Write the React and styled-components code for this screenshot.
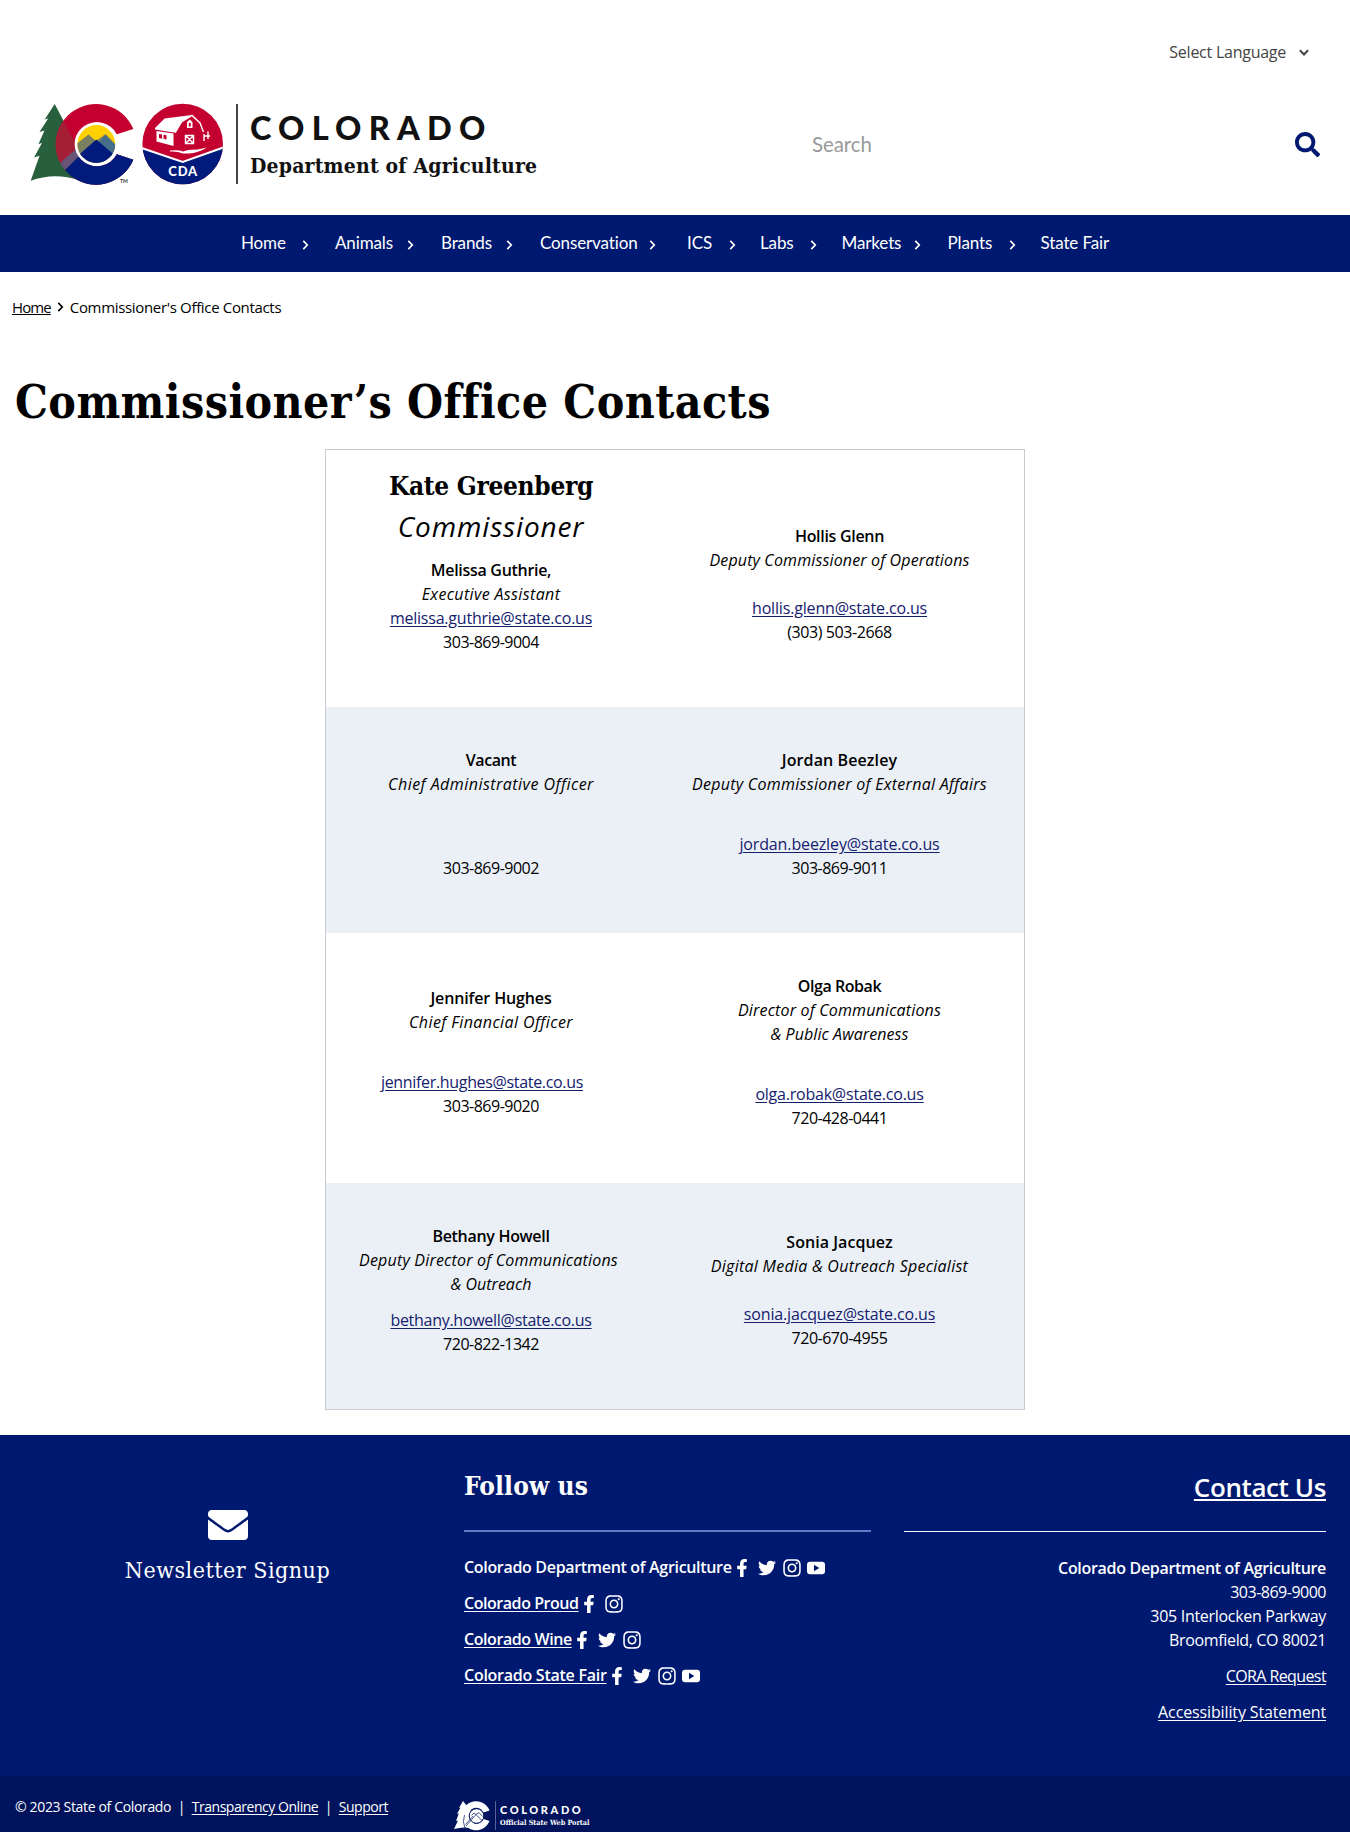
import React from 'react';
import styled, { createGlobalStyle, css } from 'styled-components';
import { FaSearch, FaEnvelope, FaFacebookF, FaTwitter, FaInstagram } from 'react-icons/fa';

const NAVY = '#001970';
const SANS = '"Open Sans", "Noto Sans", sans-serif';
const MENU = 'Lato, "Open Sans", sans-serif';
const SLAB = '"DejaVu Serif Condensed", "DejaVu Serif", serif';

const GlobalStyle = createGlobalStyle`
  * { box-sizing: border-box; }
  html, body { margin: 0; background: #fff; }
  body { font: 16px/24px ${SANS}; color: #000; overflow: hidden; }
  h1, h2, h3, p { margin: 0; }
  a { color: inherit; }
`;

const Page = styled.div`
  width: 1350px;
  height: 1832px;
  display: flex;
  flex-direction: column;
  overflow: hidden;
`;

/* ---------- header ---------- */

const Header = styled.header`
  height: 215px;
  flex: none;
  padding: 40px 30px 0 24px;
`;

const LanguageBar = styled.div`
  display: flex;
  justify-content: flex-end;
  align-items: center;
  gap: 13px;
  height: 24px;
  padding-right: 11px;
  color: #444;
  letter-spacing: -0.25px;
`;

const Masthead = styled.div`
  display: flex;
  align-items: flex-start;
  margin-top: 36px;
`;

const BrandName = styled.div`
  width: 576px;
  height: 80px;
  margin: 4px 0 0 12px;
  padding-left: 12px;
  border-left: 2px solid #444;
  white-space: nowrap;
  color: #111;
`;

const BrandState = styled.div`
  margin-top: 5px;
  font: 900 32.5px/38px ${MENU};
  letter-spacing: 7.2px;
`;

const BrandAgency = styled.div`
  margin-top: 5px;
  font: 700 21px/28px ${SLAB};
  letter-spacing: 0.18px;
`;

const SearchForm = styled.div`
  flex: 1;
  display: flex;
  justify-content: space-between;
  align-items: center;
  height: 88px;
  color: #999;
  font: 20.5px/28px ${MENU};
  letter-spacing: -0.1px;
  svg { color: ${NAVY}; }
`;

/* ---------- navigation ---------- */

const Nav = styled.nav`
  flex: none;
  display: flex;
  align-items: center;
  height: 57px;
  padding: 0 0 1px 241px;
  background: ${NAVY};
  color: #fff;
  font: 17px/24px ${MENU};
  letter-spacing: -0.12px;
`;

const NavItem = styled.div`
  flex: none;
  display: flex;
  align-items: center;
  justify-content: space-between;
  width: ${(p) => p.$width}px;
  padding-right: ${(p) => p.$after}px;
  white-space: nowrap;
  svg { margin-top: 3px; }
`;

const Crumbs = styled.div`
  display: flex;
  align-items: center;
  flex: none;
  gap: 6px;
  height: 72px;
  padding: 0 0 2px 12px;
  font-size: 15px;
  letter-spacing: -0.33px;
  a { letter-spacing: -0.9px; }
`;

const Title = styled.h1`
  flex: none;
  height: 105px;
  padding: 30px 0 0 15px;
  font: 700 46px/56px ${SLAB};
  letter-spacing: 0.42px;
  white-space: nowrap;
`;

/* ---------- contacts ---------- */

const Contacts = styled.section`
  flex: none;
  width: 700px;
  height: 961px;
  margin-left: 325px;
  border: 1px solid #c8cace;
`;

const ContactRow = styled.div`
  display: grid;
  grid-template-columns: 330px 367px;
  height: ${(p) => p.$height}px;
  background: ${(p) => (p.$shaded ? '#ebf0f7' : '#fff')};
`;

const Contact = styled.div`
  padding-top: ${(p) => p.$top}px;
  text-align: center;
  white-space: nowrap;
`;

const line = css`
  letter-spacing: ${(p) => p.$ls || 0}px;
  padding-right: ${(p) => p.$trail || 0}px;
`;

const Name = styled.p`
  ${line}
  font-weight: 600;
`;

const Role = styled.p`
  ${line}
  font-style: italic;
`;

const Lead = styled.h2`
  font: 700 26px/40px ${SLAB};
  letter-spacing: -0.3px;
`;

const LeadRole = styled.h3`
  font: italic 400 28px/40px ${SANS};
  letter-spacing: 0.85px;
  margin-bottom: 12px;
`;

const Reach = styled.div`
  margin-top: ${(p) => p.$gap}px;
`;

const Email = styled.p`
  ${line}
  a { color: #14206e; text-underline-offset: 2px; }
`;

const Phone = styled.p`
  letter-spacing: ${(p) => (p.$wide ? -0.4 : -0.5)}px;
`;

/* ---------- footer ---------- */

const Footer = styled.footer`
  flex: none;
  display: grid;
  grid-template-columns: 455px 416px 455px;
  height: 341px;
  margin-top: 25px;
  background: ${NAVY};
  color: #fff;
`;

const Newsletter = styled.div`
  display: flex;
  flex-direction: column;
  align-items: center;
  padding-top: 70px;
  font: 23px/34px ${SLAB};
  letter-spacing: 0.5px;
  svg { margin-bottom: 8px; }
`;

const Follow = styled.div`
  padding: 32px 0 0 9px;
`;

const FollowTitle = styled.h2`
  height: 65px;
  border-bottom: 2px solid #6478c4;
  font: 700 26px/38px ${SLAB};
  letter-spacing: 0.15px;
`;

const FollowList = styled.div`
  display: flex;
  flex-direction: column;
  gap: 12px;
  padding-top: 23px;
`;

const FollowItem = styled.div`
  display: flex;
  align-items: center;
  height: 24px;
  white-space: nowrap;
`;

const FollowName = styled.span`
  ${line}
  font-weight: 600;
  text-decoration: ${(p) => (p.$linked ? 'underline' : 'none')};
  text-underline-offset: 2px;
  margin-right: -2px;
`;

const Social = styled.span`
  display: flex;
  justify-content: center;
  width: 24.8px;
  padding-top: 2px;
`;

const ContactUs = styled.div`
  margin-left: 33px;
  padding-top: 32px;
  text-align: right;
  a { text-underline-offset: 2px; }
`;

const ContactTitle = styled.h2`
  height: 65px;
  margin-bottom: 24px;
  border-bottom: 1px solid #fff;
  font: 600 26px/40px ${SANS};
  letter-spacing: -0.4px;
`;

const AddressLine = styled.p`
  letter-spacing: ${(p) => p.$ls}px;
  font-weight: ${(p) => (p.$strong ? 600 : 400)};
  margin-top: ${(p) => (p.$spaced ? 12 : 0)}px;
`;

const Legal = styled.div`
  flex: none;
  display: flex;
  height: 56px;
  background: #00135c;
  color: #fff;
  font-size: 14px;
`;

const LegalLinks = styled.div`
  display: flex;
  width: 439px;
  margin-left: 15px;
  padding-top: 19px;
  letter-spacing: -0.34px;
  white-space: nowrap;
  a { text-underline-offset: 2px; letter-spacing: -0.46px; }
`;

const Bar = styled.span`
  width: 20.5px;
  text-align: center;
`;

const Portal = styled.div`
  display: flex;
  padding-top: 25px;
`;

const PortalText = styled.div`
  height: 29px;
  margin-left: 5px;
  padding-left: 4px;
  border-left: 1px solid #55629c;
  white-space: nowrap;
`;

const PortalState = styled.div`
  font: 900 11px/17px ${MENU};
  letter-spacing: 2.6px;
`;

const PortalNote = styled.div`
  font: 700 7.2px/9px ${SLAB};
`;

/* ---------- drawings ---------- */

const Chevron = ({ down }) => (
  <svg width={down ? 10 : 7} height={down ? 7 : 10} viewBox={down ? '0 0 9 6' : '0 0 6 9'} fill="none" stroke="currentColor" strokeWidth={down ? 1.8 : 1.5}>
    <path d={down ? 'M.8 1l3.7 3.8L8.200 1' : 'M1 .8l3.600 3.700L1 8.200'} />
  </svg>
);

const YouTube = () => (
  <svg width="18" height="18" viewBox="0 0 18 18" fill="#fff">
    <path fillRule="evenodd" d="M3 2.800h12a3 3 0 0 1 3 3v6.400a3 3 0 0 1-3 3H3a3 3 0 0 1-3-3V5.800a3 3 0 0 1 3-3zM7 5.800v6.400L12.300 9z" />
  </svg>
);

const SealText = styled.text`
  font: 900 13px ${MENU};
  letter-spacing: 0.8px;
`;

const TradeText = styled.text`
  font: 700 5px ${MENU};
`;

const Emblems = () => (
  <svg width="200" height="88" viewBox="0 0 200 88">
    <defs>
      <clipPath id="cshape">
        <path d="M109.300 29A40.300 40.300 0 1 0 109.300 59.700L92.800 54.300A22 22 0 1 1 92.800 34.300Z" />
      </clipPath>
      <clipPath id="disc"><circle cx="72.300" cy="44" r="18.900" /></clipPath>
      <clipPath id="seal"><circle cx="158.700" cy="44" r="40.300" /></clipPath>
      <clipPath id="tree">
        <path d="M30.700 4L20.700 19.500l3.500-1L15.500 32l5-1.500L14.500 44l3.500-1L10 57.500l5.500-1.800L6.700 80.700Q30 72 55 80L60 60Z" />
      </clipPath>
    </defs>
    <path fill="#285f3c" d="M30.700 4L20.700 19.500l3.500-1L15.500 32l5-1.500L14.500 44l3.500-1L10 57.500l5.500-1.800L6.700 80.700Q30 72 55 80L60 60Z" />
    <g clipPath="url(#cshape)">
      <rect x="30" y="0" width="82" height="88" fill="#c3002f" />
      <path d="M36 61L52 45H70V50H112V88H30Z" fill="#7a4867" />
      <path d="M41 69.500L61 50H112V88H41Z" fill="#001b7c" />
      <path clipPath="url(#tree)" d="M30 0H60V46L30 68Z" fill="#a41f34" />
      <path clipPath="url(#tree)" d="M36 63L52 49L57 54L41.500 69.500Q37 66 36 63Z" fill="#685476" />
      <path clipPath="url(#tree)" d="M41.500 69.500Q47 77 56 82L36 84Z" fill="#0b3c4a" />
    </g>
    <circle cx="72.300" cy="44" r="21.700" fill="#fff" />
    <g clipPath="url(#disc)">
      <rect x="53" y="24" width="39" height="40" fill="#ffd100" />
      <path d="M50 46L64.500 34.500L72 41L81.500 34L96 49V66H50Z" fill="#7b8060" />
      <path d="M74 43L81.500 35L96 50V66Z" fill="#456d8c" />
      <path d="M50 59L72.300 39.500L96 60V66H50Z" fill="#001b7c" />
    </g>
    <TradeText x="96" y="83" fill="#333">TM</TradeText>

    <g clipPath="url(#seal)">
      <rect x="118" y="3" width="82" height="82" fill="#c3002f" />
      <path d="M116 48L158.700 62.200L202 47V90H116Z" fill="#001b7c" />
      <path d="M116 47.500L158.700 62L202 46.500" fill="none" stroke="#fff" strokeWidth="2" />
    </g>
    <g fill="#fff">
      <path d="M140.500 18.500L168 15L158 21.500L151.500 31.500L149.500 32.500L131 29.500L131 28Z" />
      <path d="M132.500 31L149.500 33.500V46L132.500 41.500Z" />
      <path d="M146 50.500Q155 49.500 159 51.500L164 50Q174 50 183 47.500Q174 53 165 53.500L159 53.500Q153 51 146 51.500Z" />
    </g>
    <path d="M135 34l3 .5v4.200l-3-.7zM139.500 34.700l3 .5v4.300l-3-.8z" fill="#c3002f" />
    <g fill="none" stroke="#fff" strokeWidth="1.400">
      <path d="M151 33L157.500 22L168 15.500L176 23L179.500 32" />
      <path d="M161.500 35.500h8v8h-8zM161.500 35.500l8 8M169.500 35.500l-8 8" />
      <path d="M180 34v7M184 31.500v7.500M180 36h6" />
    </g>
    <path d="M163 28v-6l2.700-2.500L168.500 22v6zM164.800 23v3.500h2V23z" fill="#fff" fillRule="evenodd" />
    <SealText x="159.200" y="76.300" textAnchor="middle" fill="#fff">CDA</SealText>
  </svg>
);

const PortalEmblem = () => (
  <svg width="36" height="30" viewBox="0 0 36 30">
    <path fill="#fff" d="M9 0L5 7l1.500-.4L3 13l1.800-.5L2 20l2-.6L0 28q11-3 20 0V14z" />
    <path fill="#fff" d="M35.500 9.500A14.500 14.500 0 1 0 35.500 20L29.500 18A8 8 0 1 1 29.500 11.500Z" />
    <circle cx="22.500" cy="15" r="7.300" fill="#fff" stroke="#00135c" strokeWidth="1" />
    <path d="M11 27Q8 21 10.500 14M11.500 23.500L19 15M12 25L22 13.500L28.500 20M17.500 14.500L20 12L22 13.500L25 11.500L28.500 15.500" fill="none" stroke="#00135c" strokeWidth=".7" />
  </svg>
);

const NAV = [
  ['Home', 94, 26], ['Animals', 106, 27], ['Brands', 99, 27], ['Conservation', 147, 31],
  ['ICS', 73, 24], ['Labs', 81.500, 25], ['Markets', 106, 27], ['Plants', 93, 25],
];

const Mail = ({ to, ls, trail }) => (
  <Email $ls={ls} $trail={trail}><a href={`mailto:${to}`}>{to}</a></Email>
);

const icons = {
  f: <FaFacebookF size={18} />,
  t: <FaTwitter size={18} />,
  i: <FaInstagram size={20} />,
  y: <YouTube />,
};

const ACCOUNTS = [
  ['Colorado Department of Agriculture', -0.320, 'ftiy', false],
  ['Colorado Proud', -0.450, 'fi', true],
  ['Colorado Wine', -0.420, 'fti', true],
  ['Colorado State Fair', -0.260, 'ftiy', true],
];

export default function App() {
  return (
    <Page>
      <GlobalStyle />
      <Header>
        <LanguageBar>Select Language <Chevron down /></LanguageBar>
        <Masthead>
          <Emblems />
          <BrandName>
            <BrandState>COLORADO</BrandState>
            <BrandAgency>Department of Agriculture</BrandAgency>
          </BrandName>
          <SearchForm>Search <FaSearch size={25} /></SearchForm>
        </Masthead>
      </Header>
      <Nav>
        {NAV.map(([label, width, after]) => (
          <NavItem key={label} $width={width} $after={after}>{label}<Chevron /></NavItem>
        ))}
        <span>State Fair</span>
      </Nav>
      <Crumbs><a href="#home">Home</a><Chevron />Commissioner's Office Contacts</Crumbs>
      <Title>Commissioner’s Office Contacts</Title>

      <Contacts>
        <ContactRow $height={257}>
          <Contact $top={16}>
            <Lead>Kate Greenberg</Lead>
            <LeadRole>Commissioner</LeadRole>
            <Name $ls={-0.3}>Melissa Guthrie,</Name>
            <Role $ls={0.36}>Executive Assistant</Role>
            <Mail to="melissa.guthrie@state.co.us" ls={-0.22} />
            <Phone>303-869-9004</Phone>
          </Contact>
          <Contact $top={74}>
            <Name $ls={-0.3}>Hollis Glenn</Name>
            <Role $ls={0.14}>Deputy Commissioner of Operations</Role>
            <Reach $gap={24}>
              <Mail to="hollis.glenn@state.co.us" ls={-0.17} />
              <Phone $wide>(303) 503-2668</Phone>
            </Reach>
          </Contact>
        </ContactRow>
        <ContactRow $height={226} $shaded>
          <Contact $top={41}>
            <Name $ls={-0.4}>Vacant</Name>
            <Role $ls={0.47}>Chief Administrative Officer</Role>
            <Reach $gap={60}><Phone>303-869-9002</Phone></Reach>
          </Contact>
          <Contact $top={41}>
            <Name $ls={0.1}>Jordan Beezley</Name>
            <Role $ls={0.28}>Deputy Commissioner of External Affairs</Role>
            <Reach $gap={36}>
              <Mail to="jordan.beezley@state.co.us" ls={-0.13} />
              <Phone>303-869-9011</Phone>
            </Reach>
          </Contact>
        </ContactRow>
        <ContactRow $height={250}>
          <Contact $top={53}>
            <Name $ls={-0.13}>Jennifer Hughes</Name>
            <Role $ls={0.41}>Chief Financial Officer</Role>
            <Reach $gap={36}>
              <Mail to="jennifer.hughes@state.co.us" ls={-0.33} trail={18} />
              <Phone>303-869-9020</Phone>
            </Reach>
          </Contact>
          <Contact $top={41}>
            <Name $ls={-0.45}>Olga Robak</Name>
            <Role $ls={0.17}>Director of Communications</Role>
            <Role $ls={0.07}>&amp; Public Awareness</Role>
            <Reach $gap={36}>
              <Mail to="olga.robak@state.co.us" ls={-0.22} />
              <Phone>720-428-0441</Phone>
            </Reach>
          </Contact>
        </ContactRow>
        <ContactRow $height={226} $shaded>
          <Contact $top={41}>
            <Name $ls={-0.3}>Bethany Howell</Name>
            <Role $ls={0.19} $trail={5}>Deputy Director of Communications</Role>
            <Role>&amp; Outreach</Role>
            <Reach $gap={12}>
              <Mail to="bethany.howell@state.co.us" ls={-0.28} />
              <Phone>720-822-1342</Phone>
            </Reach>
          </Contact>
          <Contact $top={47}>
            <Name $ls={0.05}>Sonia Jacquez</Name>
            <Role $ls={0.26}>Digital Media &amp; Outreach Specialist</Role>
            <Reach $gap={24}>
              <Mail to="sonia.jacquez@state.co.us" ls={-0.16} />
              <Phone>720-670-4955</Phone>
            </Reach>
          </Contact>
        </ContactRow>
      </Contacts>

      <Footer>
        <Newsletter><FaEnvelope size={40} />Newsletter Signup</Newsletter>
        <Follow>
          <FollowTitle>Follow us</FollowTitle>
          <FollowList>
            {ACCOUNTS.map(([name, ls, marks, linked]) => (
              <FollowItem key={name}>
                <FollowName $ls={ls} $linked={linked}>{name}</FollowName>
                {marks.split('').map((m) => <Social key={m}>{icons[m]}</Social>)}
              </FollowItem>
            ))}
          </FollowList>
        </Follow>
        <ContactUs>
          <ContactTitle><a href="#contact">Contact Us</a></ContactTitle>
          <AddressLine $strong $ls={-0.31}>Colorado Department of Agriculture</AddressLine>
          <AddressLine $ls={-0.5}>303-869-9000</AddressLine>
          <AddressLine $ls={-0.3}>305 Interlocken Parkway</AddressLine>
          <AddressLine $ls={-0.35}>Broomfield, CO 80021</AddressLine>
          <AddressLine $spaced $ls={-0.6}><a href="#cora">CORA Request</a></AddressLine>
          <AddressLine $spaced $ls={-0.13}><a href="#accessibility">Accessibility Statement</a></AddressLine>
        </ContactUs>
      </Footer>
      <Legal>
        <LegalLinks>
          © 2023 State of Colorado<Bar>|</Bar><a href="#transparency">Transparency Online</a><Bar>|</Bar><a href="#support">Support</a>
        </LegalLinks>
        <Portal>
          <PortalEmblem />
          <PortalText>
            <PortalState>COLORADO</PortalState>
            <PortalNote>Official State Web Portal</PortalNote>
          </PortalText>
        </Portal>
      </Legal>
    </Page>
  );
}
